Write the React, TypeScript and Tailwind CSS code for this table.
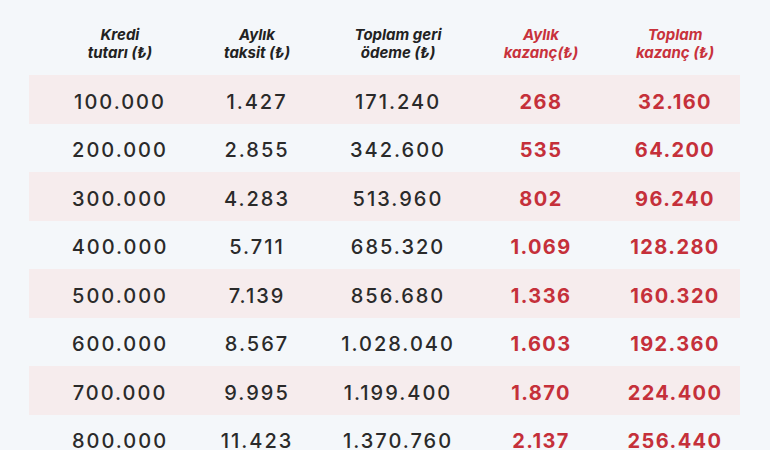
import React from 'react';

const rows = [
  ['100.000', '1.427', '171.240', '268', '32.160'],
  ['200.000', '2.855', '342.600', '535', '64.200'],
  ['300.000', '4.283', '513.960', '802', '96.240'],
  ['400.000', '5.711', '685.320', '1.069', '128.280'],
  ['500.000', '7.139', '856.680', '1.336', '160.320'],
  ['600.000', '8.567', '1.028.040', '1.603', '192.360'],
  ['700.000', '9.995', '1.199.400', '1.870', '224.400'],
  ['800.000', '11.423', '1.370.760', '2.137', '256.440'],
];

const headers: { l1: string; l2: string; red?: boolean }[] = [
  { l1: 'Kredi', l2: 'tutarı (₺)' },
  { l1: 'Aylık', l2: 'taksit (₺)' },
  { l1: 'Toplam geri', l2: 'ödeme (₺)' },
  { l1: 'Aylık', l2: 'kazanç(₺)', red: true },
  { l1: 'Toplam', l2: 'kazanç (₺)', red: true },
];

const grid = 'grid grid-cols-[140px_134px_148px_138px_130px] pl-[21px]';

export default function App() {
  return (
    <div className="w-[770px] h-[450px] overflow-hidden bg-[#f4f7fa] font-['Inter',sans-serif]">
      <div className="ml-[29px] w-[711px]">
        {/* başlık */}
        <div className={`${grid} h-[75px] pt-[26px]`}>
          {headers.map((h, i) => (
            <div
              key={i}
              className={`text-center italic font-bold text-[15px] leading-[18px] ${h.red ? 'text-[#c8323c]' : 'text-[#222222]'}`}
            >
              <div>{h.l1}</div>
              <div>{h.l2}</div>
            </div>
          ))}
        </div>

        {rows.map((r, i) => (
          <div
            key={i}
            className={`${grid} h-[48.5px] items-center ${i % 2 === 0 ? 'bg-[#f6eced]' : ''}`}
          >
            {r.map((v, j) => (
              <div
                key={j}
                className={`text-center text-[20px] pt-[5px] ${j >= 3 ? 'font-bold tracking-[0.07em] text-[#c5303a]' : 'font-medium tracking-[0.1em] text-[#2a2a2a]'}`}
              >
                {v}
              </div>
            ))}
          </div>
        ))}
      </div>
    </div>
  );
}
